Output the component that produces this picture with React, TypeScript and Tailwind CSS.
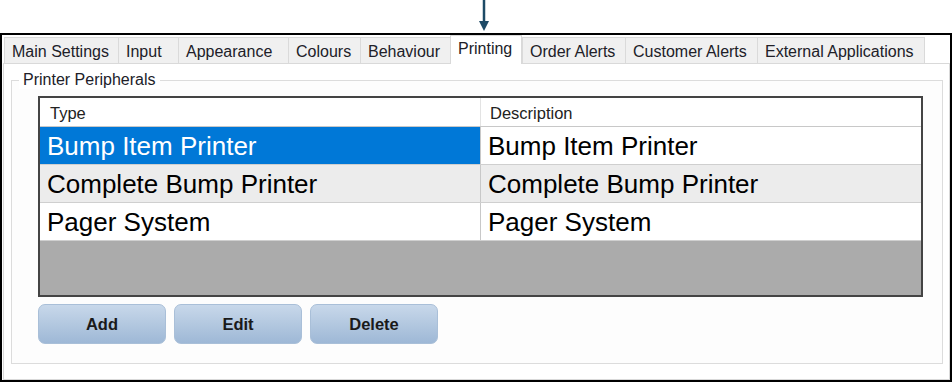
import React from "react";

const tabs = [
  { label: "Main Settings", w: "w-[114px]" },
  { label: "Input", w: "w-[60px]" },
  { label: "Appearance", w: "w-[110px]" },
  { label: "Colours", w: "w-[72px]" },
  { label: "Behaviour", w: "w-[90px]" },
  { label: "Printing", w: "w-[72px]", active: true },
  { label: "Order Alerts", w: "w-[103px]" },
  { label: "Customer Alerts", w: "w-[132px]" },
  { label: "External Applications", w: "w-[168px]" },
];

const rows = [
  { type: "Bump Item Printer", desc: "Bump Item Printer", sel: true, bg: "bg-white" },
  { type: "Complete Bump Printer", desc: "Complete Bump Printer", bg: "bg-[#ececec]" },
  { type: "Pager System", desc: "Pager System", bg: "bg-white" },
];

export default function App() {
  return (
    <div className="w-[952px] h-[382px] bg-white font-['Liberation_Sans',Arial,sans-serif] text-[#202028]">
      <div className="h-[33px] pl-[478px]">
        <svg width="12" height="33" viewBox="0 0 12 33">
          <line x1="6" y1="0" x2="6" y2="23" stroke="#1d4a66" strokeWidth="2.5" />
          <polygon points="1,21 11,21 6,31" fill="#1d4a66" />
        </svg>
      </div>
      <div className="h-[349px] border-2 border-black bg-white flex flex-col">
        <div className="flex pl-[2px] h-[28px] items-end relative z-10">
          {tabs.map((t) =>
            t.active ? (
              <div
                key={t.label}
                className={`${t.w} h-[29px] -mb-[1px] bg-white border border-b-0 border-[#d9d9d9] pl-[7px] pt-[3px] text-[16px] leading-[20px] whitespace-nowrap`}
              >
                {t.label}
              </div>
            ) : (
              <div
                key={t.label}
                className={`${t.w} h-[26px] bg-[#f0f0f0] border border-r-0 border-b-0 border-[#dadada] pl-[7px] pt-[4px] text-[16px] leading-[20px] whitespace-nowrap last:border-r`}
              >
                {t.label}
              </div>
            )
          )}
        </div>
        <div className="flex-1 ml-[1px] border border-[#d9d9d9] bg-white pt-[16px] pl-[7px] pr-[6px] pb-[15px] flex">
          <div className="relative flex-1 border border-[#dcdcdc] bg-[#fdfdfd] pt-[15px] pl-[26px] pr-[19px] flex flex-col">
            <div className="absolute -top-[10px] left-[7px] bg-white px-[4px] text-[16px] leading-[18px] whitespace-nowrap">
              Printer Peripherals
            </div>
            <div className="h-[201px] border-2 border-[#444] bg-[#ababab] flex flex-col">
              <div className="flex h-[29px] bg-white border-b border-[#c8c8c8] text-[16.5px] leading-[20px] text-[#222]">
                <div className="w-[441px] pl-[10px] pt-[5px] border-r border-[#e3e3e3]">Type</div>
                <div className="flex-1 pl-[9px] pt-[5px]">Description</div>
              </div>
              {rows.map((r) => (
                <div key={r.type} className="flex h-[38px] border-b border-[#cfcfcf] text-[26px] leading-[30px] whitespace-nowrap">
                  <div
                    className={`w-[441px] pl-[7px] pt-[4px] border-r border-[#c8c8c8] ${
                      r.sel ? "bg-[#0078d7] text-white" : `${r.bg} text-black`
                    }`}
                  >
                    {r.type}
                  </div>
                  <div className={`flex-1 pl-[7px] pt-[4px] text-black ${r.bg}`}>{r.desc}</div>
                </div>
              ))}
              <div className="flex-1" />
            </div>
            <div className="flex gap-[8px] mt-[7px]">
              {["Add", "Edit", "Delete"].map((b) => (
                <div
                  key={b}
                  className="w-[128px] h-[40px] rounded-[7px] border border-[#a9bfd8] bg-gradient-to-b from-[#c8d8ea] to-[#9eb8d6] flex items-center justify-center font-bold text-[16.5px] text-[#1a1a1a]"
                >
                  {b}
                </div>
              ))}
            </div>
          </div>
        </div>
      </div>
    </div>
  );
}
